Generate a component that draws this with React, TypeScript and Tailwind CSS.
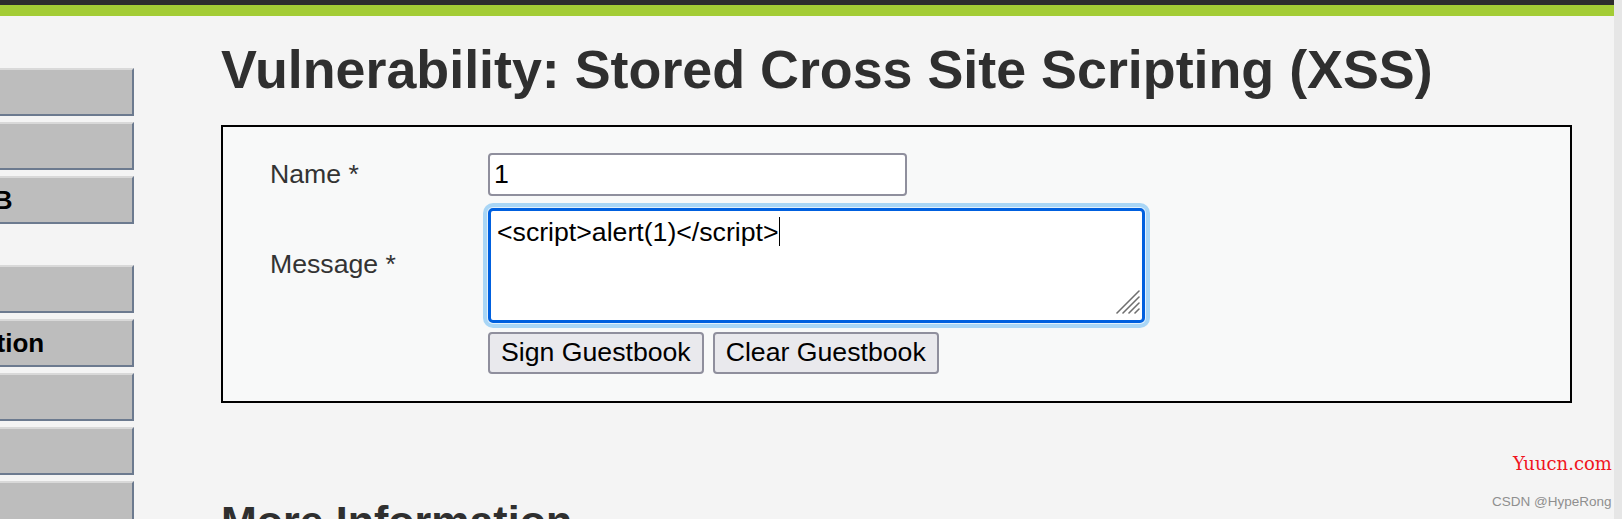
import React from "react";

const menuTop = ["Home", "Instructions", "Setup / Reset DB"];
const menuBottom = [
  "Brute Force",
  "Command Injection",
  "CSRF",
  "File Inclusion",
  "File Upload",
  "Insecure CAPTCHA",
];

function MenuButton({ label }: { label: string }) {
  return (
    <div className="shrink-0 h-[48px] mb-[6px] bg-[#bdbdbd] border-t-2 border-t-[#d9d9d9] border-r-2 border-b-2 border-r-[#6c7a8f] border-b-[#6c7a8f] flex items-center pl-[31px] font-bold text-[26px] text-black whitespace-nowrap leading-none">
      {label}
    </div>
  );
}

export default function App() {
  return (
    <div
      className="relative w-[1622px] h-[519px] overflow-hidden flex bg-[#e6e6e6]"
      style={{ fontFamily: '"Liberation Sans", Arial, sans-serif' }}
    >
      <div className="w-[1614px] flex flex-col bg-[#f4f4f4]">
        <div className="shrink-0 h-[5px] bg-[#2d2d2d]" />
        <div className="shrink-0 h-[11px] bg-[#a3cc35]" />
        <div className="flex flex-1 min-h-0 overflow-hidden">
          {/* sidebar (scrolled horizontally) */}
          <div className="w-[134px] shrink-0 overflow-hidden pt-[52px]">
            <div className="-ml-[228px] w-[362px] flex flex-col">
              {menuTop.map((m) => (
                <MenuButton key={m} label={m} />
              ))}
              <div className="shrink-0 mt-[35px]" />
              {menuBottom.map((m) => (
                <MenuButton key={m} label={m} />
              ))}
            </div>
          </div>

          {/* main */}
          <div className="ml-[87px] flex flex-col">
            <h1 className="shrink-0 mt-[27px] text-[53.8px] font-bold leading-none text-[#2f2f2f] whitespace-nowrap">
              Vulnerability: Stored Cross Site Scripting (XSS)
            </h1>

            <div className="shrink-0 mt-[28px] w-[1351px] border-2 border-black bg-[#f8f9f9] pt-[26px] pb-[27px] pl-[47px] text-[26.67px]">
              {/* Name row */}
              <div className="flex items-center">
                <div className="w-[218px] text-[#333] leading-[30px]">Name *</div>
                <div className="w-[419px] h-[43px] bg-white border-2 border-[#8f8f9d] rounded-[4px] px-[4px] flex items-center text-black leading-[30px]">
                  1
                </div>
              </div>

              {/* Message row */}
              <div className="flex items-center mt-[12px]">
                <div className="w-[218px] text-[#333] leading-[30px] -mt-[3px]">Message *</div>
                <div className="relative w-[657px] h-[115px] bg-white border-[3px] border-[#0060df] rounded-[5px] shadow-[0_0_0_1px_#e3f1fc,0_0_0_5px_#a9d6f6] pl-[6px] pt-[6px] text-black leading-[30px] whitespace-nowrap">
                  <span>{"<script>alert(1)</script>"}</span>
                  <span className="inline-block w-[1px] h-[29px] bg-black align-top ml-[1px]" />
                  <svg
                    className="absolute right-[2px] bottom-[6px]"
                    width="24"
                    height="24"
                    viewBox="0 0 24 24"
                  >
                    <g stroke="#6f6f6f" strokeWidth="1.6" strokeLinecap="round">
                      <line x1="1" y1="23" x2="23" y2="1" />
                      <line x1="7" y1="23" x2="23" y2="7" />
                      <line x1="13" y1="23" x2="23" y2="13" />
                      <line x1="19" y1="23" x2="23" y2="19" />
                    </g>
                  </svg>
                </div>
              </div>

              {/* Buttons row */}
              <div className="flex mt-[9px]">
                <div className="w-[218px]" />
                <div className="flex gap-[9px]">
                  <button className="h-[42px] px-[11px] bg-[#e9e9ed] border-2 border-[#8f8f9d] rounded-[4px] text-black leading-none whitespace-nowrap">
                    Sign Guestbook
                  </button>
                  <button className="h-[42px] px-[11px] bg-[#e9e9ed] border-2 border-[#8f8f9d] rounded-[4px] text-black leading-none whitespace-nowrap">
                    Clear Guestbook
                  </button>
                </div>
              </div>
            </div>

            <h2 className="shrink-0 mt-[97px] text-[43px] font-bold leading-none text-[#2f2f2f] whitespace-nowrap">
              More Information
            </h2>
          </div>
        </div>
      </div>
      <div className="w-[8px]" />

      {/* watermarks */}
      <div
        className="absolute left-[1513px] top-[452px] text-[18px] leading-[24px] text-[#f0141e] whitespace-nowrap"
        style={{ fontFamily: '"DejaVu Serif", "Liberation Serif", serif' }}
      >
        Yuucn.com
      </div>
      <div className="absolute left-[1492px] top-[494px] text-[13.5px] leading-[16px] text-[#8f8f8f] whitespace-nowrap">
        CSDN @HypeRong
      </div>
    </div>
  );
}
